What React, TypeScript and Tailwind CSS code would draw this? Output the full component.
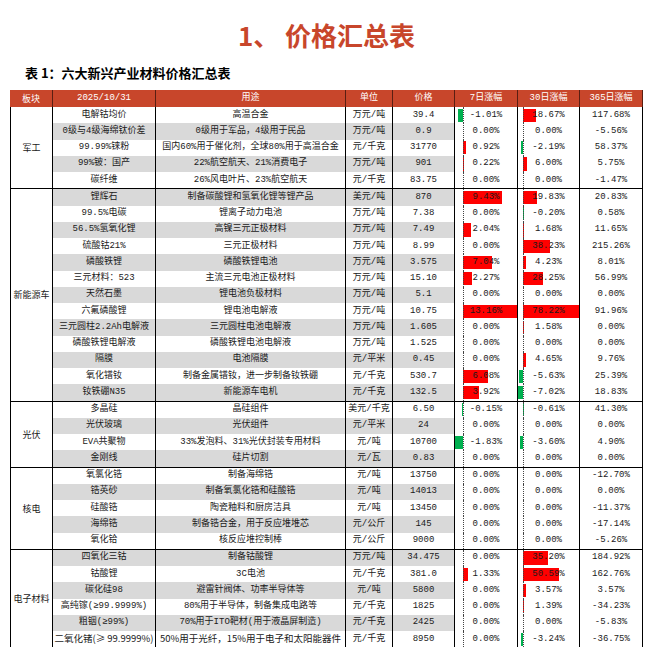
import React from "react";

type Row = {
  name: string;
  use: string;
  unit: string;
  price: string;
  d7: number;
  d30: number;
  d365: string;
  special?: boolean;
};

const sections: { label: string; rows: Row[] }[] = [
  {
    label: "军工",
    rows: [
      { name: "电解钴均价", use: "高温合金", unit: "万元/吨", price: "39.4", d7: -1.01, d30: 18.67, d365: "117.68%" },
      { name: "0级与4级海绵钛价差", use: "0级用于军品，4级用于民品", unit: "万元/吨", price: "0.9", d7: 0, d30: 0, d365: "-5.56%" },
      { name: "99.99%铼粉", use: "国内60%用于催化剂，全球80%用于高温合金", unit: "元/千克", price: "31770", d7: 0.92, d30: -2.19, d365: "58.37%" },
      { name: "99%铍：国产", use: "22%航空航天、21%消费电子", unit: "万元/吨", price: "901", d7: 0.22, d30: 6.0, d365: "5.75%" },
      { name: "碳纤维", use: "26%风电叶片、23%航空航天", unit: "元/千克", price: "83.75", d7: 0, d30: 0, d365: "-1.47%" },
    ],
  },
  {
    label: "新能源车",
    rows: [
      { name: "锂辉石", use: "制备碳酸锂和氢氧化锂等锂产品", unit: "美元/吨", price: "870", d7: 9.43, d30: 19.83, d365: "20.83%" },
      { name: "99.5%电碳", use: "锂离子动力电池", unit: "万元/吨", price: "7.38", d7: 0, d30: -0.2, d365: "0.58%" },
      { name: "56.5%氢氧化锂", use: "高镍三元正极材料", unit: "万元/吨", price: "7.49", d7: 2.04, d30: 1.68, d365: "11.65%" },
      { name: "硫酸钴21%", use: "三元正极材料", unit: "万元/吨", price: "8.99", d7: 0, d30: 38.23, d365: "215.26%" },
      { name: "磷酸铁锂", use: "磷酸铁锂电池", unit: "万元/吨", price: "3.575", d7: 7.04, d30: 4.23, d365: "8.01%" },
      { name: "三元材料：523", use: "主流三元电池正极材料", unit: "万元/吨", price: "15.10", d7: 2.27, d30: 28.25, d365: "56.99%" },
      { name: "天然石墨", use: "锂电池负极材料", unit: "万元/吨", price: "5.1", d7: 0, d30: 0, d365: "0.00%" },
      { name: "六氟磷酸锂", use: "锂电池电解液", unit: "万元/吨", price: "10.75", d7: 13.16, d30: 78.22, d365: "91.96%" },
      { name: "三元圆柱2.2Ah电解液", use: "三元圆柱电池电解液", unit: "万元/吨", price: "1.605", d7: 0, d30: 1.58, d365: "0.00%" },
      { name: "磷酸铁锂电解液", use: "磷酸铁锂电池电解液", unit: "万元/吨", price: "1.525", d7: 0, d30: 0, d365: "0.00%" },
      { name: "隔膜", use: "电池隔膜", unit: "元/平米", price: "0.45", d7: 0, d30: 4.65, d365: "9.76%" },
      { name: "氧化镨钕", use: "制备金属镨钕，进一步制备钕铁硼", unit: "元/千克", price: "530.7", d7: 6.08, d30: -5.63, d365: "25.39%" },
      { name: "钕铁硼N35", use: "新能源车电机", unit: "元/千克", price: "132.5", d7: 3.92, d30: -7.02, d365: "18.83%" },
    ],
  },
  {
    label: "光伏",
    rows: [
      { name: "多晶硅", use: "晶硅组件", unit: "美元/千克", price: "6.50", d7: -0.15, d30: -0.61, d365: "41.30%" },
      { name: "光伏玻璃", use: "光伏组件", unit: "元/平米", price: "24", d7: 0, d30: 0, d365: "0.00%" },
      { name: "EVA共聚物", use: "33%发泡料、31%光伏封装专用材料", unit: "元/吨", price: "10700", d7: -1.83, d30: -3.6, d365: "4.90%" },
      { name: "金刚线", use: "硅片切割", unit: "元/瓦", price: "0.83", d7: 0, d30: 0, d365: "0.00%" },
    ],
  },
  {
    label: "核电",
    rows: [
      { name: "氧氯化锆", use: "制备海绵锆", unit: "元/吨", price: "13750", d7: 0, d30: 0, d365: "-12.70%" },
      { name: "锆英砂", use: "制备氧氯化锆和硅酸锆", unit: "元/吨", price: "14013", d7: 0, d30: 0, d365: "0.00%" },
      { name: "硅酸锆", use: "陶瓷釉料和厨房洁具", unit: "元/吨", price: "13450", d7: 0, d30: 0, d365: "-11.37%" },
      { name: "海绵锆", use: "制备锆合金，用于反应堆堆芯", unit: "元/公斤", price: "145", d7: 0, d30: 0, d365: "-17.14%" },
      { name: "氧化铪", use: "核反应堆控制棒", unit: "元/公斤", price: "9000", d7: 0, d30: 0, d365: "-5.26%" },
    ],
  },
  {
    label: "电子材料",
    rows: [
      { name: "四氧化三钴", use: "制备钴酸锂", unit: "万元/吨", price: "34.475", d7: 0, d30: 35.2, d365: "184.92%" },
      { name: "钴酸锂", use: "3C电池", unit: "元/千克", price: "381.0", d7: 1.33, d30: 50.59, d365: "162.76%" },
      { name: "碳化硅98", use: "避雷针阀体、功率半导体等", unit: "元/吨", price: "5800", d7: 0, d30: 3.57, d365: "3.57%" },
      { name: "高纯镓(≥99.9999%)", use: "80%用于半导体，制备集成电路等", unit: "元/千克", price: "1825", d7: 0, d30: 1.39, d365: "-34.23%" },
      { name: "粗铟(≥99%)", use: "70%用于ITO靶材(用于液晶屏制造)", unit: "元/千克", price: "2425", d7: 0, d30: 0, d365: "-5.83%" },
      { name: "二氧化锗(≥ 99.9999%)", use: "50%用于光纤，15%用于电子和太阳能器件", unit: "元/千克", price: "8950", d7: 0, d30: -3.24, d365: "-36.75%", special: true },
    ],
  },
];

const GRID = "grid grid-cols-[103px_190px_47px_62px_63px_62px_63px]";

function fmt(v: number) {
  return v.toFixed(2) + "%";
}

function BarCell({ v, min, max, inner }: { v: number; min: number; max: number; inner: number }) {
  const range = max - min;
  const axis = (inner * -min) / range;
  const w = (Math.abs(v) / range) * inner;
  const left = v >= 0 ? axis : axis - w;
  return (
    <div className="relative flex items-center justify-center border-r border-black bg-white">
      {v !== 0 && (
        <div
          className={"absolute top-[1.5px] bottom-[1.5px] " + (v > 0 ? "bg-[#ff0000]" : "bg-[#00b050]")}
          style={{ left, width: Math.max(w, 1) }}
        />
      )}
      <div className="absolute top-0 bottom-0 border-l border-dotted border-[#444]" style={{ left: axis }} />
      <span className="relative">{fmt(v)}</span>
    </div>
  );
}

export default function App() {
  let idx = 0;
  return (
    <div className="w-[660px] h-[647px] overflow-hidden bg-white text-[#1a1a1a]">
      <div className="pt-[22px] w-[653px] text-center h-[48px] leading-[26px] text-[26px] font-bold text-[#c8462b] font-['Noto_Sans_CJK_SC',sans-serif]">
        1、 价格汇总表
      </div>
      <div className="mt-[18px] pl-[25px] h-[13px] leading-[13px] text-[13px] font-bold text-black font-['Noto_Sans_CJK_SC',sans-serif]">
        表 1：六大新兴产业材料价格汇总表
      </div>
      <div className="mt-[11px] ml-[10px] w-[633px] text-[9px] leading-none font-['Liberation_Mono','Noto_Sans_CJK_SC',monospace]">
        <div className="flex h-[17px] bg-[#c8462b] text-white">
          <div className="w-[43px] shrink-0 flex items-center justify-center border-r border-[#5a1e12] font-['Noto_Sans_CJK_SC',sans-serif]">
            板块
          </div>
          <div className={GRID + " flex-1"}>
            {["2025/10/31", "用途", "单位", "价格", "7日涨幅", "30日涨幅", "365日涨幅"].map((h) => (
              <div key={h} className="flex items-center justify-center border-r border-[#5a1e12]">
                {h}
              </div>
            ))}
          </div>
        </div>
        {sections.map((s, si) => (
          <div key={s.label} className={"flex " + (si > 0 ? "border-t border-black" : "")}>
            <div className="w-[43px] shrink-0 flex items-center justify-center border-l border-r border-black font-['Noto_Sans_CJK_SC',sans-serif]">
              {s.label}
            </div>
            <div className="flex flex-col flex-1">
              {s.rows.map((r) => {
                const gray = idx % 2 === 1;
                idx++;
                const bg = gray ? "bg-[#d9d9d9]" : "bg-white";
                const sp = r.special ? " font-['Noto_Sans_CJK_SC',sans-serif] text-[9.5px]" : "";
                return (
                  <div key={r.name} className={GRID + " h-[16.25px]"}>
                    <div className={"flex items-center justify-center whitespace-nowrap border-r border-black " + bg + sp}>
                      {r.name}
                    </div>
                    <div className={"flex items-center justify-center whitespace-nowrap overflow-hidden border-r border-black " + bg + sp}>
                      {r.use}
                    </div>
                    <div className={"flex items-center justify-center whitespace-nowrap border-r border-black " + bg}>
                      {r.unit}
                    </div>
                    <div className={"flex items-center justify-center border-r border-black " + bg}>{r.price}</div>
                    <BarCell v={r.d7} min={-1.83} max={13.16} inner={62} />
                    <BarCell v={r.d30} min={-7.02} max={78.22} inner={61} />
                    <div className="flex items-center justify-center border-r border-black bg-white">{r.d365}</div>
                  </div>
                );
              })}
            </div>
          </div>
        ))}
      </div>
    </div>
  );
}
